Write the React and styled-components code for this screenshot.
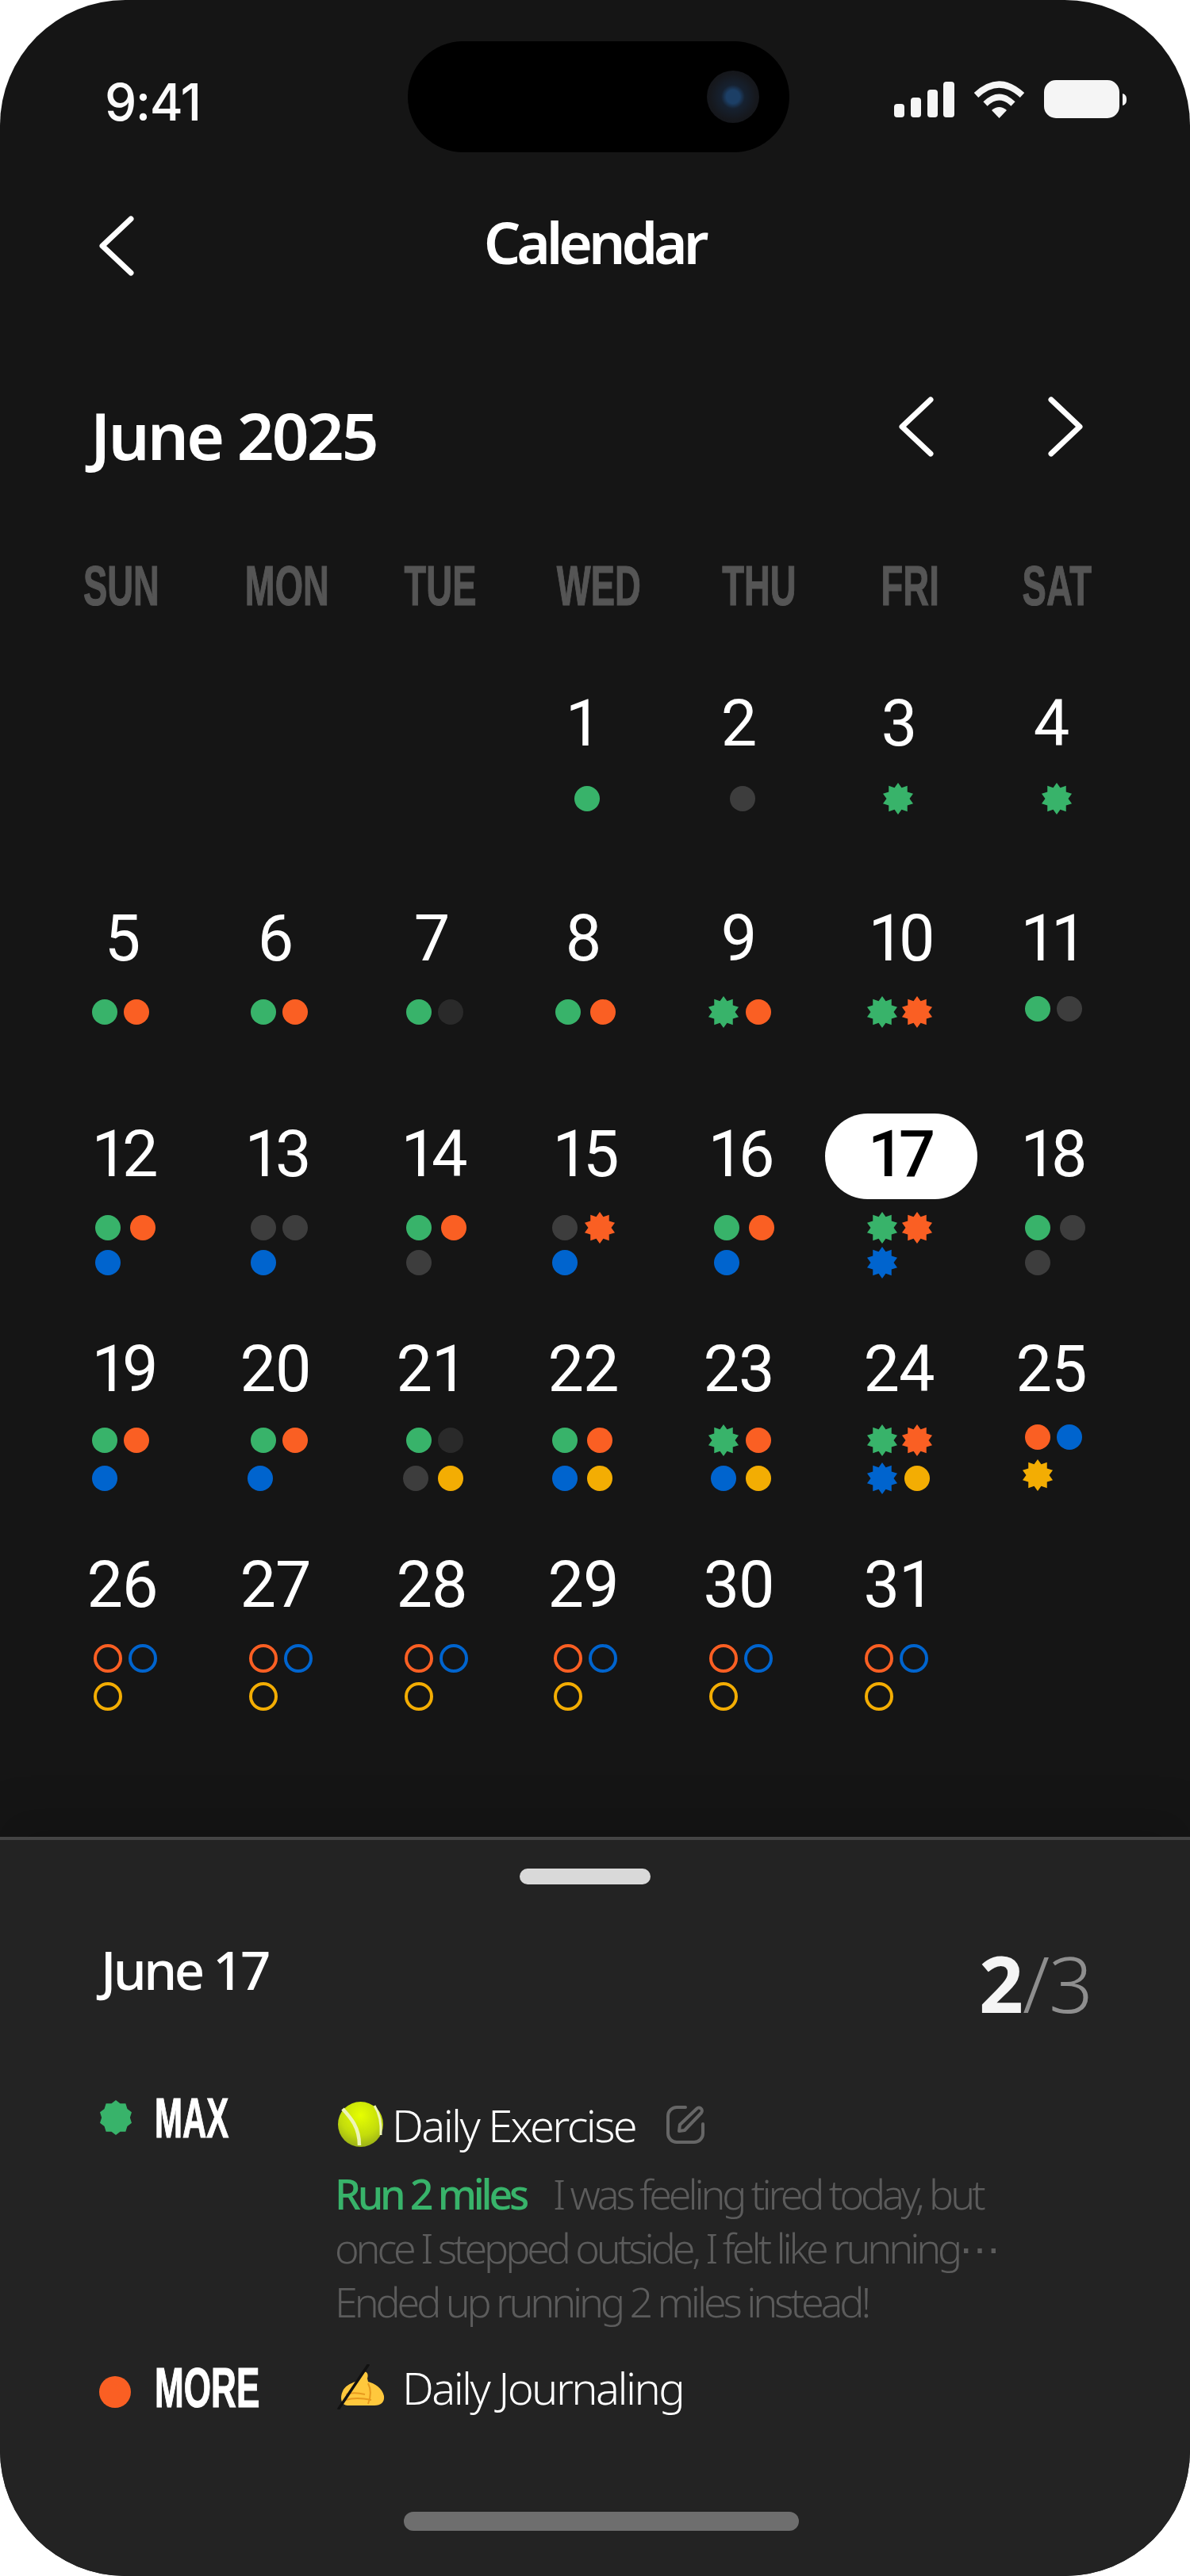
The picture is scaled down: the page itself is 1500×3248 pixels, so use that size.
import React from 'react';
import styled, { createGlobalStyle } from 'styled-components';

const Global = createGlobalStyle`
  html, body { margin: 0; padding: 0; background: #fff; }
  * { box-sizing: border-box; }
`;

const UI = '"Noto Sans", "Open Sans", sans-serif';
const COND = '"Liberation Sans", Arial, sans-serif';
const NUM = 'Roboto, "Noto Sans", sans-serif';

const Screen = styled.div`
  width: 1500px; height: 3248px; background: #151515; border-radius: 158px;
  overflow: hidden; display: flex; flex-direction: column; font-family: ${UI}; color: #fff;
`;
const StatusBar = styled.div`
  display: grid; grid-template-columns: 514px 481px 1fr; height: 140px; margin-top: 52px;
`;
const Time = styled.div`
  padding: 46px 0 0 132px; font: 500 64px/62px Inter, sans-serif; letter-spacing: -1.5px; color: #fbfbfb; height: 100px;
`;
const Island = styled.div`
  background: #000; border-radius: 70px; display: flex; align-items: center; justify-content: flex-end; padding-right: 38px;
`;
const Camera = styled.div`
  width: 66px; height: 66px; border-radius: 50%;
  background: radial-gradient(circle, #1c3f66 0 18%, #162130 32%, #16181d 62%, #111215 100%);
`;
const StatusIcons = styled.div`
  display: flex; align-items: flex-start; padding: 49px 0 0 132px;
`;
const Bars = styled.svg`width: 76px; height: 46px; margin-top: 2px; margin-right: 24px;`;
const Wifi = styled.svg`width: 65px; height: 47px; margin-top: 1px; margin-right: 24px;`;
const Battery = styled.svg`width: 104px; height: 48px;`;

const NavBar = styled.div`
  display: grid; grid-template-columns: 1fr auto 1fr; align-items: center; height: 76px; margin-top: 80px; padding: 0 124px; 
`;
const NavTitle = styled.div`
  font-weight: 600; font-size: 73px; line-height: 76px; letter-spacing: -5.1px; margin: -10px 0 0 -2px;
`;
const Chevron = styled.svg`width: 46px; height: 76px; display: block;`;
const MonthRow = styled.div`
  display: flex; align-items: center; justify-content: space-between; height: 76px; margin-top: 152px; padding: 0 134px 0 114px;
`;
const MonthTitle = styled.div`
  font-weight: 600; font-size: 82px; line-height: 76px; letter-spacing: -2.9px; margin-top: 20px;
`;
const MonthNav = styled.div`display: flex; gap: 142px;`;

const WeekRow = styled.div`display: flex; height: 51px; margin-top: 137px; padding-left: 105px;`;
const WeekCell = styled.div`
  display: flex; justify-content: center; width: ${p => p.$w}px; margin-right: ${p => p.$mr}px;
`;
const Condensed = styled.span`
  font: 700 71px/51px ${COND}; white-space: nowrap; display: inline-block;
  transform: scaleX(${p => p.$sx}); color: ${p => p.$color}; -webkit-text-stroke: 1.2px ${p => p.$color};
`;
const CalGrid = styled.div`
  display: grid; grid-template-columns: 192px 194px 200px 182px 210px 194px 190px;
  grid-auto-rows: 271.5px; margin-top: 93px; padding-left: 58px;
`;
const Cell = styled.div`display: flex; flex-direction: column;`;
const Num = styled.div`
  height: 108px; flex: none; display: flex; align-items: center; justify-content: center; padding-top: 3px;
  font: 400 81px/108px ${NUM}; letter-spacing: ${p => p.$tight ? -7 : -1}px; color: #fff;
`;
const TodayNum = styled(Num)`
  width: 192px; margin: 4px 0 -4px 4px; padding: 0 6px 5px 0; background: #fff; color: #000; border-radius: 54px; font-weight: 500;
`;
const Dots = styled.div`
  display: grid; grid-template-columns: 32px 32px; width: max-content;
  column-gap: ${p => p.$gx - 32}px; row-gap: ${p => p.$gy - 32}px;
  margin-left: ${p => p.$x}px; margin-top: ${p => p.$top}px;
`;
const Dot = styled.span`
  display: block; width: 32px; height: 32px; border-radius: 50%; background: ${p => p.$c};
  ${p => p.$nudge ? `transform: translateX(${p.$nudge}px);` : ''}
`;
const Ring = styled.span`
  display: block; width: 36px; height: 36px; margin: -2px; border-radius: 50%; border: 4px solid ${p => p.$c};
`;
const StarSvg = styled.svg`display: block; width: 40px; height: 40px; margin: -4px; fill: ${p => p.$c};`;
const StarMark = styled.svg`width: 42px; height: 44px; fill: #38b36a; display: block; margin-top: 2px;`;

const Panel = styled.div`
  margin-top: auto; height: 932px; background: #232323; border-top: 4px solid #444; display: flex; flex-direction: column;
  box-shadow: 0 -30px 50px rgba(0,0,0,.12);
`;
const Handle = styled.div`
  width: 165px; height: 20px; margin: 36px 0 0 655px; border-radius: 10px; background: #d9d9d9; flex: none;
`;
const PanelHead = styled.div`
  display: flex; justify-content: space-between; align-items: flex-start; margin-top: 87px; padding: 0 123px 0 127px; height: 96px;
`;
const DateTitle = styled.div`
  font-weight: 500; font-size: 67px; line-height: 67px; letter-spacing: -3.6px; margin-top: -13px;
`;
const Count = styled.div`
  font-size: 98px; line-height: 83px; font-weight: 300; color: #8e8e8e; letter-spacing: -1px; margin-top: -4px;
  b { font-weight: 700; color: #f5f5f5; }
`;
const HabitRow = styled.div`
  display: grid; grid-template-columns: 70px 227px 1fr; padding-left: 125px;
  margin-top: ${p => p.$mt}px;
`;
const LabelWrap = styled.div`height: 50px;`;
const Label = styled(Condensed)`font-size: 70px; line-height: 50px; transform-origin: left center; display: block; width: max-content;`;
const OrangeDot = styled.div`width: 40px; height: 40px; border-radius: 50%; background: #fa5f23; margin-top: 10px;`;
const HabitTitle = styled.div`
  display: flex; align-items: center; height: 57px; margin-top: ${p => p.$mt}px; font-weight: 300; font-size: 56px; letter-spacing: -2.6px; color: #fff;
`;
const Emoji = styled.svg`flex: none; display: block; margin-left: ${p => p.$ml}px; margin-right: ${p => p.$mr}px;`;
const EditIcon = styled.svg`width: 48px; height: 49px; margin-left: 39px; flex: none;`;
const Note = styled.div`
  margin-top: 25px; font-weight: 300; font-size: 52px; line-height: 68px; letter-spacing: -4.1px; color: #5c5c5c; white-space: nowrap;
`;
const Goal = styled.span`color: #38b36a; font-weight: 500; margin-right: 34px; letter-spacing: -4.2px;`;
const HomeBar = styled.div`
  width: 498px; height: 24px; border-radius: 12px; background: #6e6e6e; margin: auto 0 57px 509px; flex: none;
`;

const COLORS = { g: '#38b36a', o: '#fa5f23', b: '#0064ce', y: '#f3ad03', k: '#3d3d3d', d: '#2a2a2a' };
const makeStar = (inner) => {
  const pts = [];
  for (let i = 0; i < 20; i++) {
    const r = i % 2 === 0 ? 20 : inner;
    const a = (Math.PI * i) / 10 - Math.PI / 2;
    pts.push(`${(20 + r * Math.cos(a)).toFixed(2)},${(20 + r * Math.sin(a)).toFixed(2)}`);
  }
  return pts.join(' ');
};
const starPts = makeStar(14.5);
const scallopPts = makeStar(17);
const Star = ({ c }) => <StarSvg $c={c} viewBox="0 0 40 40"><polygon points={starPts} /></StarSvg>;

const colLeft = [58, 250, 444, 644, 826, 1036, 1230];
const weeks = [
  { top: 26, gy: 44, days: [
    [3, 1, 740, 44, 'g'], [4, 2, 936, 44, 'k'], [5, 3, 1132, 44, 'G'], [6, 4, 1332, 44, 'G'],
  ] },
  { top: 23.5, gy: 44, days: [
    [0, 5, 132, 40, 'go'], [1, 6, 332, 40, 'go'], [2, 7, 528, 40, 'gd'], [3, 8, 716, 44, 'go'],
    [4, 9, 912, 44, 'Go'], [5, 10, 1112, 44, 'GO'], [6, 11, 1308, 40, 'gk', -4],
  ] },
  { top: 23.5, gy: 44, days: [
    [0, 12, 136, 44, 'gob'], [1, 13, 332, 40, 'kkb'], [2, 14, 528, 44, 'gok'], [3, 15, 712, 44, 'kOb'],
    [4, 16, 916, 44, 'gob'], [5, 17, 1112, 44, 'GOB'], [6, 18, 1308, 44, 'gkk'],
  ] },
  { top: 20, gy: 48, days: [
    [0, 19, 132, 40, 'gob'], [1, 20, 332, 40, 'gob', 0, -4], [2, 21, 528, 40, 'gdky', 0, -4], [3, 22, 712, 44, 'goby'],
    [4, 23, 912, 44, 'Goby'], [5, 24, 1112, 44, 'GOBy'], [6, 25, 1308, 40, 'obY', -4],
  ] },
  { top: 24, gy: 48, ring: true, days: [
    [0, 26, 136, 44, 'oby'], [1, 27, 332, 44, 'oby'], [2, 28, 528, 44, 'oby'], [3, 29, 716, 44, 'oby'],
    [4, 30, 912, 44, 'oby'], [5, 31, 1108, 44, 'oby'],
  ] },
];

const weekdays = [
  ['SUN', 96, 110], ['MON', 102, 96], ['TUE', 91, 101], ['WED', 108, 100], ['THU', 96, 103], ['FRI', 78, 103], ['SAT', 86, 0],
];

const ChevL = () => (
  <Chevron viewBox="0 0 46 76"><path d="M41 4 L5 38 L41 72" fill="none" stroke="#fff" strokeWidth="7" strokeLinecap="round" strokeLinejoin="round" /></Chevron>
);
const ChevR = () => (
  <Chevron viewBox="0 0 46 76"><path d="M5 4 L41 38 L5 72" fill="none" stroke="#fff" strokeWidth="7" strokeLinecap="round" strokeLinejoin="round" /></Chevron>
);

const Ball = () => (
  <Emoji $ml={4} $mr={11} width="57" height="57" viewBox="0 0 57 57">
    <defs>
      <radialGradient id="ball" cx="0.5" cy="0.3" r="0.75">
        <stop offset="0" stopColor="#e6ff00" />
        <stop offset="0.6" stopColor="#c3dc0c" />
        <stop offset="1" stopColor="#93a91a" />
      </radialGradient>
    </defs>
    <circle cx="28.5" cy="28.5" r="28.5" fill="url(#ball)" />
    <path d="M6 9 C16 20 27 32 27 55" fill="none" stroke="#eef5b8" strokeWidth="4.5" />
    <path d="M46 5 C52 14 55 24 54 42" fill="none" stroke="#eef5b8" strokeWidth="3" />
  </Emoji>
);
const Hand = () => (
  <Emoji $ml={2} $mr={22} width="61" height="57" viewBox="0 0 61 57">
    <path d="M8 34 C10 28 18 24 24 22 L34 10 C38 8 41 12 39 18 L40 22 C48 24 58 30 60 40 C61 48 56 52 48 52 L14 52 C6 52 4 42 8 34 Z" fill="#ffc83d" />
    <path d="M12 38 C20 35 28 36 36 38 M12 45 C22 42 34 43 44 45 M40 24 C44 32 44 40 40 50" fill="none" stroke="#e89a1e" strokeWidth="2" />
    <path d="M3 56 L40 1" stroke="#111" strokeWidth="3.5" strokeLinecap="round" />
  </Emoji>
);

export default function App() {
  return (
    <Screen>
      <Global />
      <StatusBar>
        <Time>9:41</Time>
        <Island><Camera /></Island>
        <StatusIcons>
          <Bars viewBox="0 0 76 46" fill="#f5f5f5">
            <rect x="0" y="28" width="13" height="17" rx="4" />
            <rect x="21" y="20" width="13" height="25" rx="4" />
            <rect x="42" y="10" width="13" height="35" rx="4" />
            <rect x="62" y="0" width="14" height="45" rx="4" />
          </Bars>
          <Wifi viewBox="0 0 65 47">
            <path d="M3.5 18 Q32.5 -9 61.5 18" fill="none" stroke="#f5f5f5" strokeWidth="8" />
            <path d="M15 29 Q32.5 12 50 29" fill="none" stroke="#f5f5f5" strokeWidth="7.5" />
            <path d="M32.5 47 L23 37 Q32.5 29 42 37 Z" fill="#f5f5f5" />
          </Wifi>
          <Battery viewBox="0 0 104 48" fill="#f5f5f5">
            <rect x="0" y="0" width="95" height="48" rx="15" />
            <path d="M99 17 C103 18 104 21 104 24.5 C104 28 103 31 99 32 Z" />
          </Battery>
        </StatusIcons>
      </StatusBar>

      <NavBar>
        <ChevL />
        <NavTitle>Calendar</NavTitle>
        <span />
      </NavBar>

      <MonthRow>
        <MonthTitle>June 2025</MonthTitle>
        <MonthNav><ChevL /><ChevR /></MonthNav>
      </MonthRow>

      <WeekRow>
        {weekdays.map(([t, w, mr]) => (
          <WeekCell key={t} $w={w} $mr={mr}><Condensed $sx={0.64} $color="#555">{t}</Condensed></WeekCell>
        ))}
      </WeekRow>

      <CalGrid>
        {weeks.flatMap((wk, wi) => wk.days.map(([col, d, x, gx, marks, dy = 0, nudge = 0]) => (
          <Cell key={d} style={{ gridColumn: col + 1, gridRow: wi + 1 }}>
            {d === 17 ? <TodayNum $tight>{d}</TodayNum> : <Num $tight={d >= 10 && d < 20}>{d}</Num>}
            <Dots $gx={gx} $gy={wk.gy} $x={x - 16 - colLeft[col]} $top={wk.top + dy}>
              {[...marks].map((m, i) => {
                const c = COLORS[m.toLowerCase()];
                if (wk.ring) return <Ring key={i} $c={c} />;
                if (m !== m.toLowerCase()) return <Star key={i} c={c} />;
                return <Dot key={i} $c={c} $nudge={i === 2 ? nudge : 0} />;
              })}
            </Dots>
          </Cell>
        )))}
      </CalGrid>

      <Panel>
        <Handle />
        <PanelHead>
          <DateTitle>June 17</DateTitle>
          <Count><b>2</b>/3</Count>
        </PanelHead>
        <HabitRow $mt={87}>
          <StarMark viewBox="0 0 40 40" preserveAspectRatio="none"><polygon points={scallopPts} /></StarMark>
          <LabelWrap><Label $sx={0.6} $color="#fff">MAX</Label></LabelWrap>
          <div>
            <HabitTitle $mt={4}>
              <Ball />Daily Exercise
              <EditIcon viewBox="0 0 48 49" fill="none" stroke="#666" strokeWidth="4" strokeLinejoin="round" strokeLinecap="round">
                <path d="M24 3 H13 A11 11 0 0 0 2 14 V36 A11 11 0 0 0 13 47 H35 A11 11 0 0 0 46 36 V24" />
                <path d="M16 33 L17 25 L38 5 A3.6 3.6 0 0 1 44 10 L23 32 Z" />
              </EditIcon>
            </HabitTitle>
            <Note>
              <Goal>Run 2 miles</Goal>I was feeling tired today, but<br />
              once I stepped outside, I felt like running⋯<br />
              Ended up running 2 miles instead!
            </Note>
          </div>
        </HabitRow>
        <HabitRow $mt={50}>
          <OrangeDot />
          <LabelWrap><Label $sx={0.63} $color="#fff">MORE</Label></LabelWrap>
          <HabitTitle $mt={-5}><Hand />Daily Journaling</HabitTitle>
        </HabitRow>
        <HomeBar />
      </Panel>
    </Screen>
  );
}
